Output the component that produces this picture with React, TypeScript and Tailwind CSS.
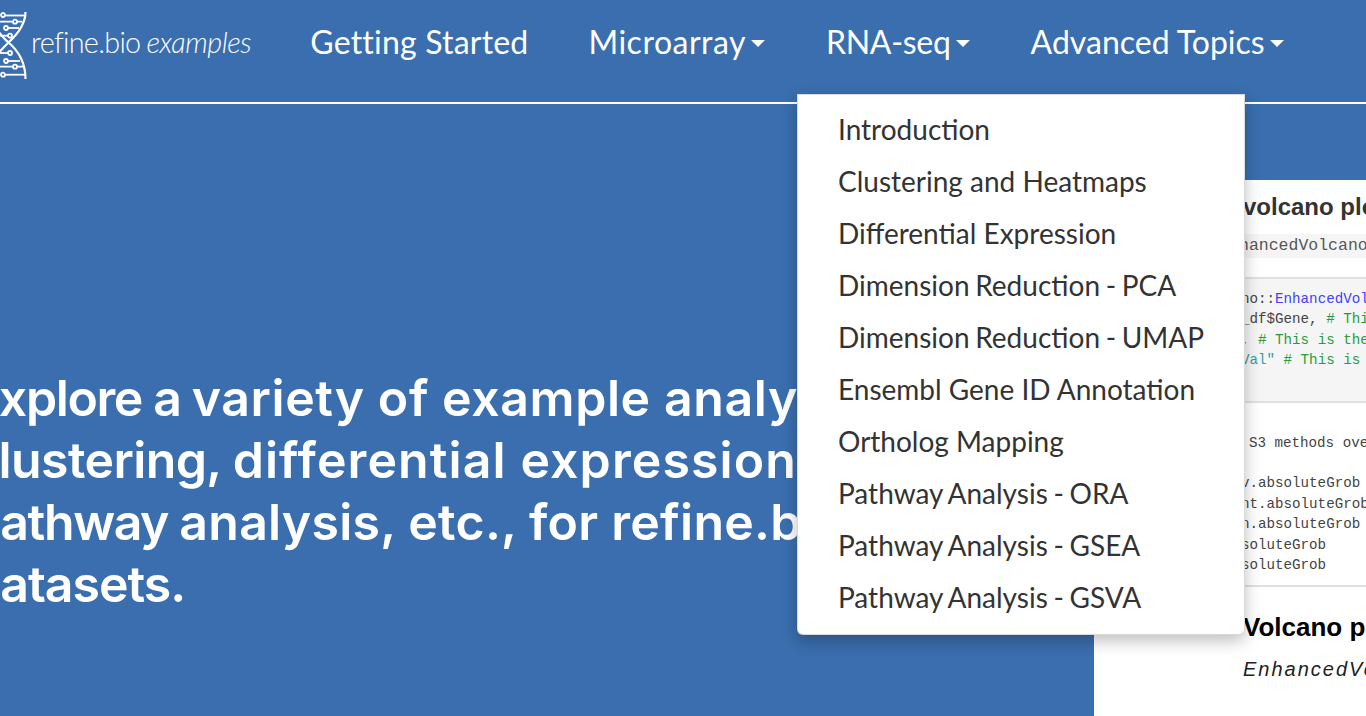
const menu = [
  "Introduction",
  "Clustering and Heatmaps",
  "Differential Expression",
  "Dimension Reduction - PCA",
  "Dimension Reduction - UMAP",
  "Ensembl Gene ID Annotation",
  "Ortholog Mapping",
  "Pathway Analysis - ORA",
  "Pathway Analysis - GSEA",
  "Pathway Analysis - GSVA",
];

function Caret() {
  return <span className="ml-[5px] mt-[3px] inline-block h-0 w-0 border-x-[7.5px] border-t-[7px] border-x-transparent border-t-white tracking-normal" />;
}

function NavItem({ label, caret, className }: { label: string; caret?: boolean; className: string }) {
  return (
    <div className={`flex items-center text-[32px] leading-[40px] text-white whitespace-nowrap ${className}`}>
      {label}
      {caret && <Caret />}
    </div>
  );
}

function Logo() {
  return (
    <svg width="28" height="70" viewBox="0 0 28 70" className="shrink-0 mt-[7px]" fill="none" stroke="white" strokeWidth="1.8">
      <path d="M25.5 1 C25.5 12 20 21 8 32 C3 37 0 40 -2 43" strokeWidth="2.2" />
      <path d="M25.5 68 C25.5 52 20 41 8 31 C4 28 1 24 -2 20" strokeWidth="2.2" />
      <path d="M5 4.5 H25" />
      <path d="M0 10.7 H13 M17 10.7 H22" />
      <path d="M8 17 H19" />
      <path d="M0 24.7 H8" />
      <path d="M0 42 H8" />
      <path d="M8 50 H20" />
      <path d="M0 55.7 H13 M17 55.7 H24" />
      <path d="M5 63.7 H25" />
      <circle cx="3" cy="4" r="2" />
      <circle cx="15" cy="10.7" r="2" />
      <circle cx="6" cy="17" r="2" />
      <circle cx="10" cy="24.7" r="2" />
      <circle cx="10" cy="42" r="2" />
      <circle cx="6" cy="50" r="2" />
      <circle cx="15" cy="55.7" r="2" />
      <circle cx="3" cy="63.7" r="2" />
    </svg>
  );
}

function CodeLine({ children, className = "" }: { children: React.ReactNode; className?: string }) {
  return <div className={`h-[20.4px] leading-[20.4px] whitespace-nowrap ${className}`}>{children}</div>;
}

function Card() {
  return (
    <div className="ml-auto mt-[76px] h-[536px] w-[272px] shrink-0 overflow-hidden bg-white pl-[150px] text-[#333]">
      <div className="w-[300px] -ml-[1px]">
        <div className="pt-[12px] text-[24px] leading-[30px] font-bold text-[#333] [font-family:'Liberation_Sans',sans-serif] whitespace-nowrap">volcano plot</div>
        <div className="mt-[12px] -ml-[4px] h-[24px] bg-[#f5f5f5] text-[16.5px] leading-[24px] text-[#555] [font-family:'Liberation_Mono',monospace] whitespace-nowrap">hancedVolcano</div>
        <div className="mt-[19px] -ml-[2px] h-[126px] border-y-2 border-[#e0e0e0] bg-[#f5f5f5] pt-[10px] text-[14.2px] text-[#444] [font-family:'Liberation_Mono',monospace]">
          <CodeLine>no::<span className="text-[#4040ff]">EnhancedVolcano</span></CodeLine>
          <CodeLine>_df$Gene, <span className="text-[#2a9a3a]"># This</span></CodeLine>
          <CodeLine>, <span className="text-[#2a9a3a]"># This is the</span></CodeLine>
          <CodeLine><span className="text-[#3a9a9a]">Val"</span> <span className="text-[#2a9a3a]"># This is</span></CodeLine>
        </div>
        <div className="-ml-[2px] h-[184px] border-b-2 border-[#e0e0e0] pt-[30px] text-[14.2px] text-[#444] [font-family:'Liberation_Mono',monospace]">
          <CodeLine className="pl-[8px]">S3 methods ove</CodeLine>
          <div className="h-[20px]" />
          <CodeLine>v.absoluteGrob</CodeLine>
          <CodeLine>nt.absoluteGrob</CodeLine>
          <CodeLine>n.absoluteGrob</CodeLine>
          <CodeLine>soluteGrob</CodeLine>
          <CodeLine>soluteGrob</CodeLine>
        </div>
        <div className="pt-[20px] text-[26px] leading-[40px] font-bold text-black [font-family:'Liberation_Sans',sans-serif] whitespace-nowrap">Volcano plot</div>
        <div className="mt-[9px] text-[20px] leading-[26px] italic tracking-[2px] text-[#222] [font-family:'Liberation_Sans',sans-serif] whitespace-nowrap">EnhancedVolcano</div>
      </div>
    </div>
  );
}

export default function App() {
  return (
    <div className="relative h-[716px] w-[1366px] overflow-hidden bg-[#3a6eae] [font-family:Lato,sans-serif]">
      <nav className="flex h-[104px] items-center border-b-2 border-white pb-[18px]">
        <Logo />
        <div className="ml-[3px] mr-[59px] flex items-baseline whitespace-nowrap text-[28.8px] leading-[32px] font-light text-white">
          <span className="tracking-[-0.7px]">refine.bio</span>
          <span className="ml-[6px] italic tracking-[-0.4px]">examples</span>
        </div>
        <NavItem label="Getting Started" className="mr-[60px] tracking-[0.2px]" />
        <NavItem label="Microarray" caret className="mr-[61px] tracking-[0.5px]" />
        <NavItem label="RNA-seq" caret className="mr-[61px] tracking-[-0.3px]" />
        <NavItem label="Advanced Topics" caret className="" />
      </nav>

      <main className="flex h-[612px]">
        <div className="-ml-[30px] mt-[263px] w-[900px] shrink-0 text-[50px] leading-[62px] font-semibold text-white [font-family:Inter,sans-serif]">
          <div className="whitespace-nowrap"><span className="tracking-[-1.4px]">Explore a </span><span className="tracking-[0.6px]">variety of example analyses</span></div>
          <div className="whitespace-nowrap"><span className="tracking-[-0.6px]">clustering, </span><span className="tracking-[1.1px]">differential expression,</span></div>
          <div className="whitespace-nowrap"><span className="tracking-[-1.4px]">pathway </span><span className="tracking-[0.25px]">analysis, etc., for refine.bio</span></div>
          <div className="whitespace-nowrap tracking-[-1px]">datasets.</div>
        </div>
        <Card />
      </main>

      <ul className="absolute left-[797px] top-[94px] h-[541px] w-[448px] rounded-b-[6px] border border-[#00000026] bg-white py-[8px] shadow-[0_6px_16px_rgba(0,0,0,0.25)]">
        {menu.map((m) => (
          <li key={m} className={`h-[52px] pl-[40px] text-[28px] leading-[52px] text-[#333] whitespace-nowrap ${m.includes(" - ") ? "[word-spacing:-1.5px]" : ""}`}>{m}</li>
        ))}
      </ul>
    </div>
  );
}
